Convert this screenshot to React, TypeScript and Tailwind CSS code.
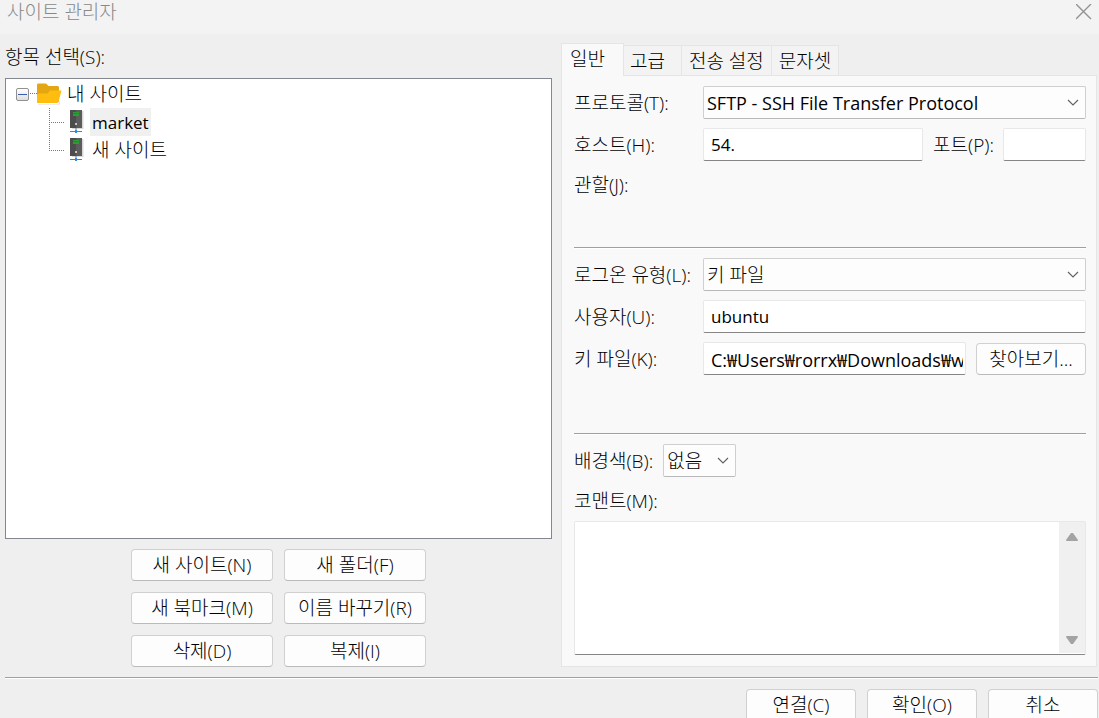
import React, { useState } from 'react';
import clsx from 'clsx';

const tabs = ['일반', '고급', '전송 설정', '문자셋'];
const siteActions = ['새 사이트(N)', '새 폴더(F)', '새 북마크(M)', '이름 바꾸기(R)', '삭제(D)', '복제(I)'];
const dialogActions = ['연결(C)', '확인(O)', '취소'];

const inputClass =
    'h-[33px] w-full min-w-0 border border-[#e8e8e8] border-b-[#868686] bg-white pl-[7px] pr-[2px] rounded-xs outline-none font-normal';

const Button: React.FC<{ label: string; className?: string }> = ({ label, className }) => (
    <button
        type="button"
        className={clsx('h-8 shrink-0 rounded-sm border border-[#d0d0d0] border-b-[#bababa] bg-[#fdfdfd] whitespace-nowrap', className)}
    >
        {label}
    </button>
);

const Select: React.FC<{ id: string; value: string; className?: string }> = ({ id, value, className }) => (
    <div className={clsx('relative', className)}>
        <select
            id={id}
            defaultValue={value}
            className="h-[33px] w-full appearance-none rounded-xs border border-[#cfcfcf] border-b-[#b8b8b8] bg-[#fdfdfd] pl-[3px] pr-6 outline-none"
        >
            <option>{value}</option>
        </select>
        <svg className="pointer-events-none absolute right-[7px] top-[13px]" width="12" height="8" viewBox="0 0 12 8" fill="none" stroke="#606060" strokeWidth="1.1">
            <path d="M1 1l5 5 5-5" />
        </svg>
    </div>
);

const Separator = () => <hr className="h-[2px] border-t border-b border-t-[#a0a0a0] border-b-white" />;

const Field: React.FC<{ id: string; label: string; children?: React.ReactNode }> = ({ id, label, children }) => (
    <div className="flex items-center">
        <label htmlFor={id} className="w-[129px] shrink-0 whitespace-nowrap">{label}</label>
        <div className="flex min-w-0 flex-1 items-center">{children}</div>
    </div>
);

const FolderIcon = () => (
    <svg width="25" height="22" viewBox="0 0 25 22">
        <path d="M1 21h20.500l1.500-3v3.500H1z" fill="#dcdcdc" />
        <path d="M0 1.500L1 .5h8l2.500 2.500H21l1 1V19H0z" fill="#e4a611" />
        <path d="M0 20V11.500l2-1h8.500L13 7.500h11.500L21.500 19l-1 1z" fill="#ffbd10" />
    </svg>
);

const ServerIcon = () => (
    <svg width="14" height="24" viewBox="0 0 14 24">
        <path d="M2 1h11.500v18H2z" fill="#d8d8d8" />
        <path d="M0 0h12v18H0z" fill="#4c4c4c" />
        <path d="M6 0h6v18H6z" fill="#5c5c5c" />
        <path d="M3 2h6v1.500H3zM3 4h6v2H3z" fill="#2d9c34" />
        <circle cx="6" cy="14" r="1" fill="#e8e8e8" />
        <path d="M5.500 18h1v2h-1zM0 21h12v1H0z" fill="#777" />
        <path d="M5 20h2v1h1v1H7v1H5v-1H4v-1h1z" fill="#2a8ceb" />
    </svg>
);

// dotted connector in front of a child site
const Branch: React.FC<{ last?: boolean }> = ({ last }) => (
    <svg width="15" height="28" viewBox="0 0 15 28" fill="none" stroke="#777" strokeDasharray="1 1">
        <path d={last ? 'M.5 0v15' : 'M.5 0v28'} />
        <path d="M0 14.500h15" />
    </svg>
);

const SiteTree = () => (
    <ul className="flex-1 border border-[#828790] bg-white pt-px">
        <li>
            <div className="flex h-7 items-center pl-[10px]">
                <button type="button" aria-label="접기" className="flex size-[13px] items-center justify-center rounded-xs border border-[#919191] bg-linear-to-b from-white to-[#dedede]">
                    <span className="h-px w-[9px] bg-[#3a5cad]" />
                </button>
                <svg width="8" height="2" viewBox="0 0 8 2" stroke="#777" strokeDasharray="1 1">
                    <path d="M1 .5h7" />
                </svg>
                <FolderIcon />
                <span className="pl-[5px]">내 사이트</span>
            </div>
            <ul>
                <li className="flex h-7 items-center pl-[43px]">
                    <Branch />
                    <span className="px-[6px]"><ServerIcon /></span>
                    <span className="h-7 bg-[#f0f0f0] px-[2px] text-[17px] leading-[30px] font-normal">market</span>
                </li>
                <li className="flex h-7 items-center pl-[43px]">
                    <Branch last />
                    <span className="px-[6px]"><ServerIcon /></span>
                    <span className="px-[2px]">새 사이트</span>
                </li>
            </ul>
        </li>
    </ul>
);

const App = () => {
    const [activeTab, setActiveTab] = useState(0);

    return (
        <div className="flex h-screen flex-col overflow-hidden bg-[#efefef] font-['Open_Sans','Noto_Sans_CJK_KR',sans-serif] text-[19px] leading-6 font-light text-black">
            <header className="flex h-[34px] shrink-0 items-start justify-between bg-[#f3f3f3] pl-[7px] pr-[7px] text-[#888]">
                <h1 className="font-light">사이트 관리자</h1>
                <button type="button" aria-label="닫기" className="pt-1">
                    <svg width="16" height="16" viewBox="0 0 16 16" stroke="#939393" strokeWidth="1.400">
                        <path d="M0 0l15 15M15 0L0 15" />
                    </svg>
                </button>
            </header>

            <main className="grid shrink-0 grid-cols-[547fr_536fr] gap-[9px] pl-[5px] pr-[2px]">
                <section className="flex min-w-0 flex-col pt-[11px]">
                    <h2 className="mb-[9px] font-light">항목 선택(S):</h2>
                    <SiteTree />
                    <div className="mt-[10px] grid grid-cols-[142px_142px] justify-center gap-[11px]">
                        {siteActions.map((label) => (
                            <Button key={label} label={label} />
                        ))}
                    </div>
                </section>

                <section className="min-w-0 pt-[9px]">
                    <div role="tablist" className="flex h-8 items-end">
                        {tabs.map((tab, i) => (
                            <button
                                key={tab}
                                type="button"
                                role="tab"
                                aria-selected={i === activeTab}
                                onClick={() => setActiveTab(i)}
                                className={clsx(
                                    'whitespace-nowrap border-t border-r border-[#e5e5e5]',
                                    i === 0 && 'border-l pl-2 pr-[18px]',
                                    i === 1 && 'pl-[6px] pr-4',
                                    i > 1 && 'px-[7px]',
                                    i === activeTab ? 'z-10 -mb-px h-[33px] bg-[#f9f9f9] pb-[2px]' : 'h-[30px] bg-[#f3f3f3]',
                                )}
                            >
                                {tab}
                            </button>
                        ))}
                    </div>

                    <form className="border border-[#e5e5e5] bg-[#f9f9f9] pt-[10px] pr-[10px] pb-[11px] pl-3">
                        <div className="flex flex-col gap-[9px]">
                            <Field id="protocol" label="프로토콜(T):">
                                <Select id="protocol" value="SFTP - SSH File Transfer Protocol" className="flex-1 text-[18px] font-normal" />
                            </Field>
                            <Field id="host" label="호스트(H):">
                                <input id="host" defaultValue="54." className={clsx(inputClass, 'text-[17px]')} />
                                <label htmlFor="port" className="w-20 shrink-0 whitespace-nowrap pl-[10px]">포트(P):</label>
                                <input id="port" className={clsx(inputClass, 'max-w-[83px] text-[17px]')} />
                            </Field>
                            <p className="h-[30px] leading-[30px]">관할(J):</p>
                        </div>
                        <div className="pt-[47px] pb-[9px]"><Separator /></div>

                        <div className="flex flex-col gap-[9px]">
                            <Field id="logon" label="로그온 유형(L):">
                                <Select id="logon" value="키 파일" className="flex-1" />
                            </Field>
                            <Field id="user" label="사용자(U):">
                                <input id="user" defaultValue="ubuntu" className={clsx(inputClass, 'text-[17px]')} />
                            </Field>
                            <Field id="keyfile" label="키 파일(K):">
                                <input id="keyfile" defaultValue="C:₩Users₩rorrx₩Downloads₩w" className={clsx(inputClass, 'text-[18px]')} />
                                <Button label="찾아보기..." className="ml-[10px] w-[110px]" />
                            </Field>
                        </div>
                        <div className="pt-[58px] pb-[9px]"><Separator /></div>

                        <div className="flex items-center gap-[10px]">
                            <label htmlFor="color">배경색(B):</label>
                            <Select id="color" value="없음" className="w-[73px]" />
                        </div>
                        <label htmlFor="comment" className="mt-[9px] block h-[35px] leading-[30px]">코맨트(M):</label>
                        <div className="flex h-[134px] rounded-xs border border-[#e8e8e8] border-b-[#868686] bg-white">
                            <textarea id="comment" className="min-w-0 flex-1 resize-none px-[7px] outline-none" />
                            <div className="mb-px flex w-[26px] flex-col items-center justify-between bg-[#f0f0f0] pt-[10px] pb-2">
                                <button type="button" aria-label="위로">
                                    <svg width="12" height="10" viewBox="0 0 12 10" fill="#a3a3a3"><path d="M5 1h2l5 7-.500 1H.5L0 8z" /></svg>
                                </button>
                                <button type="button" aria-label="아래로">
                                    <svg width="12" height="10" viewBox="0 0 12 10" fill="#a3a3a3"><path d="M5 9h2l5-7-.500-1H.5L0 2z" /></svg>
                                </button>
                            </div>
                        </div>
                    </form>
                </section>
            </main>

            <footer className="shrink-0 pt-[10px] pl-[5px] pr-px">
                <Separator />
                <div className="mt-[10px] flex justify-end gap-[11px]">
                    {dialogActions.map((label) => (
                        <Button key={label} label={label} className="w-[110px]" />
                    ))}
                </div>
            </footer>
        </div>
    );
};

export default App;
